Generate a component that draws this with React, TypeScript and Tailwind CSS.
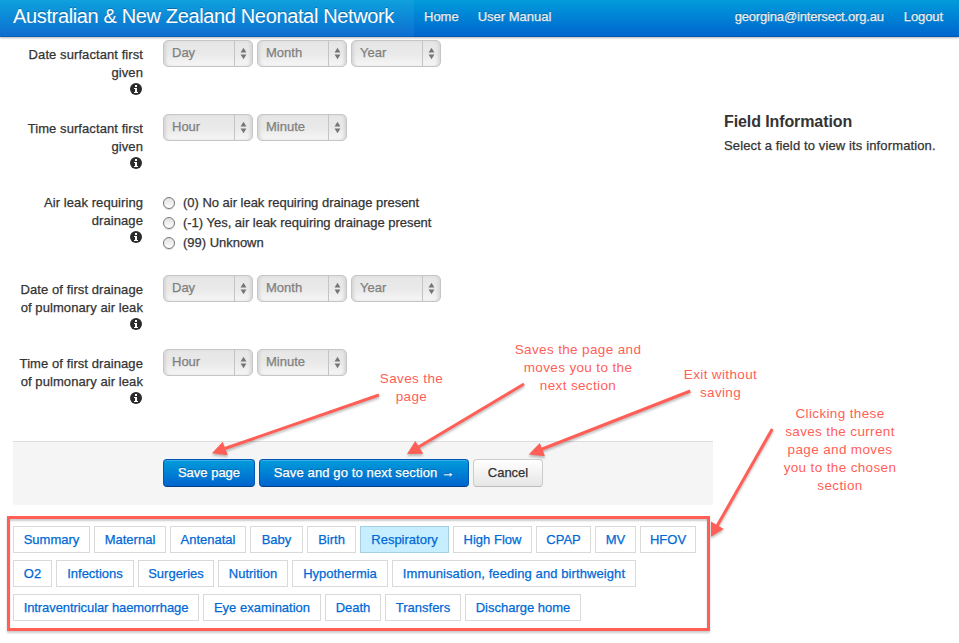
import type { ReactNode } from "react";

function Select({ label }: { label: string }) {
  return (
    <div className="flex h-[27px] w-[90px] rounded-[5px] border border-[#c6c6c6] bg-linear-to-b from-[#e6e6e6] via-[#e9e9e9] to-[#f6f6f6] shadow-[inset_3px_0_3px_-1px_#d6d6d6,inset_-3px_0_3px_-1px_#d6d6d6]">
      <span className="w-[71px] border-r border-[#c4c4c4] pl-2 text-[13px] leading-[24px] text-[#808080]">{label}</span>
      <svg className="ml-[5px] mt-[6px]" width="7" height="13" viewBox="0 0 7 13" fill="#757575">
        <path d="M3.5 0.8L6.4 5.6H0.6Z" />
        <path d="M3.5 12.2L6.4 7.6H0.6Z" />
      </svg>
    </div>
  );
}

function InfoIcon() {
  return (
    <svg className="mr-px mt-px" width="12" height="12" viewBox="0 0 12 12">
      <circle cx="6" cy="6" r="6" fill="#2b2b2b" />
      <path d="M5 2h2v2H5zM4 5h3v4h1v1H4V9h1V6H4z" fill="#fff" />
    </svg>
  );
}

function Row({ lines, height, children }: { lines: string[]; height: string; children: ReactNode }) {
  return (
    <div className={`flex ${height}`}>
      <div className="flex w-[143px] shrink-0 flex-col items-end pt-[6px] text-right leading-[18px] tracking-[0.08px]">
        {lines.map((l) => (
          <span key={l} className="whitespace-nowrap">{l}</span>
        ))}
        <InfoIcon />
      </div>
      <div className="ml-5 flex items-start gap-1">{children}</div>
    </div>
  );
}

const rows: [string, string][][] = [
  [
    ["Summary", "w-[77px]"],
    ["Maternal", "w-[72px]"],
    ["Antenatal", "w-[76px]"],
    ["Baby", "w-[53px]"],
    ["Birth", "w-[49px]"],
    ["Respiratory", "w-[89px]"],
    ["High Flow", "w-[79px]"],
    ["CPAP", "w-[55px]"],
    ["MV", "w-[41px]"],
    ["HFOV", "w-[56px]"],
  ],
  [
    ["O2", "w-[39px]"],
    ["Infections", "w-[78px]"],
    ["Surgeries", "w-[76px]"],
    ["Nutrition", "w-[70px]"],
    ["Hypothermia", "w-[96px]"],
    ["Immunisation, feeding and birthweight", "w-[244px] tracking-[0.09px]"],
  ],
  [
    ["Intraventricular haemorrhage", "w-[186px] tracking-[-0.08px]"],
    ["Eye examination", "w-[118px]"],
    ["Death", "w-[56px]"],
    ["Transfers", "w-[76px]"],
    ["Discharge home", "w-[116px]"],
  ],
];

const options = [
  "(0) No air leak requiring drainage present",
  "(-1) Yes, air leak requiring drainage present",
  "(99) Unknown",
];

const notes = [
  { at: "left-[361px] top-[370px] w-[101px]", lines: ["Saves the", "page"] },
  { at: "left-[508px] top-[341px] w-[140px]", lines: ["Saves the page and", "moves you to the", "next section"] },
  { at: "left-[670px] top-[366px] w-[101px]", lines: ["Exit without", "saving"] },
  { at: "left-[770px] top-[405px] w-[140px]", lines: ["Clicking these", "saves the current", "page and moves", "you to the chosen", "section"] },
];

const arrows = [
  { line: "M379 395L222 449.5", head: "212,453.3 222.7,441.7 227.8,455.3" },
  { line: "M524 384L416 448.5", head: "407,454 415.3,441 423.3,453.8" },
  { line: "M690.3 391L541 449.5", head: "528.7,454.6 539.8,443 545,456.2" },
  { line: "M772.3 429L716.5 527", head: "711,536.8 711,521.5 723.8,529" },
];

export default function App() {
  return (
    <div className="relative h-[643px] w-[959px] overflow-hidden bg-white font-['Liberation_Sans',Arial,sans-serif] text-[13px] text-[#333] [-webkit-text-stroke:0.25px]">
      <header className="flex h-[37px] bg-linear-to-b from-[#049cdb] to-[#0064cd] text-[13px] text-[#ececec] shadow-[0_1px_2px_rgba(0,0,0,0.3),inset_0_-1px_0_rgba(0,0,0,0.12)] [text-shadow:0_-1px_0_rgba(0,0,0,0.25)]">
        <div className="w-[414px] whitespace-nowrap bg-white/5 pl-[13px] text-[20px] leading-[33px] tracking-[-0.36px] text-white [-webkit-text-stroke:0]">
          Australian &amp; New Zealand Neonatal Network
        </div>
        <nav className="flex flex-1 leading-[34px]">
          <a className="ml-[10px]">Home</a>
          <a className="ml-[19px]">User Manual</a>
          <a className="ml-auto tracking-[-0.17px]">georgina@intersect.org.au</a>
          <a className="ml-[20px] mr-[16px] tracking-[-0.1px]">Logout</a>
        </nav>
      </header>

      <div className="flex pt-[3px]">
        <main className="w-[713px]">
          <Row lines={["Date surfactant first", "given"]} height="h-[74px]">
            <Select label="Day" />
            <Select label="Month" />
            <Select label="Year" />
          </Row>
          <Row lines={["Time surfactant first", "given"]} height="h-[74px]">
            <Select label="Hour" />
            <Select label="Minute" />
          </Row>
          <Row lines={["Air leak requiring", "drainage"]} height="h-[87px]">
            <div className="flex flex-col pt-[5px] leading-[20px] tracking-[-0.02px]">
              {options.map((o) => (
                <label key={o} className="flex items-center gap-[8px] whitespace-nowrap">
                  <span className="-mt-px h-[12px] w-[12px] rounded-full border border-[#777] bg-linear-to-b from-[#e0e0e0] to-white shadow-[0_1px_1px_rgba(0,0,0,0.15)]" />
                  {o}
                </label>
              ))}
            </div>
          </Row>
          <Row lines={["Date of first drainage", "of pulmonary air leak"]} height="h-[74px]">
            <Select label="Day" />
            <Select label="Month" />
            <Select label="Year" />
          </Row>
          <Row lines={["Time of first drainage", "of pulmonary air leak"]} height="h-[92px]">
            <Select label="Hour" />
            <Select label="Minute" />
          </Row>

          <div className="ml-[13px] flex h-[64px] gap-1 rounded-b-[3px] border-t border-[#ddd] bg-[#f5f5f5] pl-[150px] pt-[17px]">
            <button className="h-[28px] w-[92px] rounded-[4px] border border-[#0055b5] border-b-[#003f81] bg-linear-to-b from-[#049cdb] to-[#0064cd] pb-px text-white shadow-[inset_0_1px_0_rgba(255,255,255,0.2)] [text-shadow:0_-1px_0_rgba(0,0,0,0.25)]">
              Save page
            </button>
            <button className="h-[28px] w-[210px] whitespace-nowrap rounded-[4px] border border-[#0055b5] border-b-[#003f81] bg-linear-to-b from-[#049cdb] to-[#0064cd] pb-px tracking-[0.12px] text-white shadow-[inset_0_1px_0_rgba(255,255,255,0.2)] [text-shadow:0_-1px_0_rgba(0,0,0,0.25)]">
              Save and go to next section →
            </button>
            <button className="h-[28px] w-[70px] rounded-[4px] border border-[#ccc] border-b-[#bbb] bg-linear-to-b from-white to-[#e6e6e6] pb-px">
              Cancel
            </button>
          </div>
        </main>

        <aside className="ml-[11px] pt-[73px]">
          <h2 className="text-[16px] font-bold leading-[18px] tracking-[-0.1px] [-webkit-text-stroke:0]">Field Information</h2>
          <p className="mt-[6px] whitespace-nowrap leading-[18px] tracking-[0.13px]">Select a field to view its information.</p>
        </aside>
      </div>

      <div className="ml-[7px] mt-[11px] flex h-[115px] w-[703px] flex-col gap-[7px] border-3 border-[#ff5f57] pl-[3px] pt-[7px] shadow-[0_2px_2px_rgba(0,0,0,0.2),inset_0_2px_2px_rgba(0,0,0,0.2)]">
        {rows.map((row, i) => (
          <div key={i} className="flex gap-1">
            {row.map(([name, width]) => (
              <a
                key={name}
                className={`h-[27px] shrink-0 whitespace-nowrap border text-center leading-[25px] text-[#0069d6] ${width} ${
                  name === "Respiratory" ? "border-[#a2cfe2] bg-[#c7eeff]" : "border-[#d9d9d9] bg-white"
                }`}
              >
                {name}
              </a>
            ))}
          </div>
        ))}
      </div>

      {notes.map((n) => (
        <div key={n.lines[0]} className={`absolute text-center text-[13.5px] leading-[18px] tracking-[0.36px] text-[#ff5f57] [-webkit-text-stroke:0] ${n.at}`}>
          {n.lines.map((l) => (
            <div key={l} className="whitespace-nowrap">{l}</div>
          ))}
        </div>
      ))}

      <svg className="pointer-events-none absolute inset-0 drop-shadow-[0_2px_1px_rgba(0,0,0,0.25)]" width="959" height="643">
        {arrows.map((a) => (
          <g key={a.line}>
            <path d={a.line} stroke="#ff5f57" strokeWidth="3" />
            <polygon points={a.head} fill="#ff5f57" />
          </g>
        ))}
      </svg>
    </div>
  );
}
